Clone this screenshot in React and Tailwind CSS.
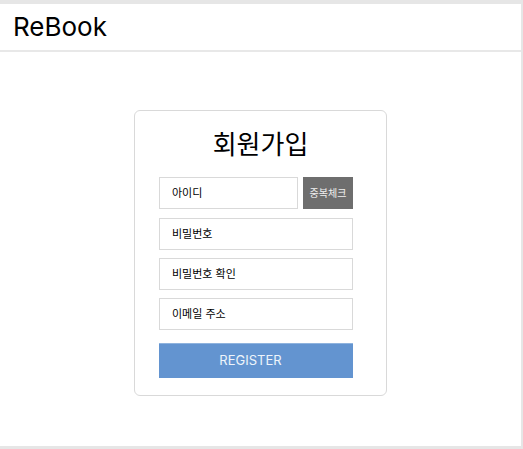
export default function App() {
  return (
    <div className="h-[449px] w-[523px] bg-[#e6e6e6] pt-[4px] pr-[2px] pb-[3px] font-['Inter','Noto_Sans_CJK_KR',sans-serif]">
      <div className="flex h-full flex-col bg-white">
        <header className="flex h-[48px] items-center border-b-2 border-[#e8e8e8] pl-[13px]">
          <span className="text-[26px] leading-none text-black">ReBook</span>
        </header>
        <main className="flex flex-1 justify-center pt-[58px]">
          <div className="flex h-[286px] w-[253px] flex-col rounded-[6px] border border-[#d9d9d9] pt-[17px]">
            <h1 className="w-full text-center text-[26px] leading-[34px] text-black">회원가입</h1>
            <div className="flex flex-col pl-[24px]">
              <div className="mt-[15px] flex w-[194px] gap-[5px]">
                <div className="flex h-[32px] w-[139px] items-center border border-[#d9d9d9] px-[12px] text-[11px] text-black">아이디</div>
                <button className="flex h-[32px] w-[50px] items-center justify-center bg-[#6e6e6e] text-[10px] text-[#f0f0f0]">중복체크</button>
              </div>
              <div className="mt-[9px] flex h-[32px] w-[194px] items-center border border-[#d9d9d9] px-[12px] text-[11px] text-black">비밀번호</div>
              <div className="mt-[8px] flex h-[32px] w-[194px] items-center border border-[#d9d9d9] px-[12px] text-[11px] text-black">비밀번호 확인</div>
              <div className="mt-[8px] flex h-[32px] w-[194px] items-center border border-[#d9d9d9] px-[12px] text-[11px] text-black">이메일 주소</div>
              <button className="mt-[13px] flex h-[35px] w-[194px] items-center justify-center border-t border-[#8fb3de] bg-[#6394d0] pr-[11px] text-[13px] text-[#eef4fb]">REGISTER</button>
            </div>
          </div>
        </main>
      </div>
    </div>
  );
}
